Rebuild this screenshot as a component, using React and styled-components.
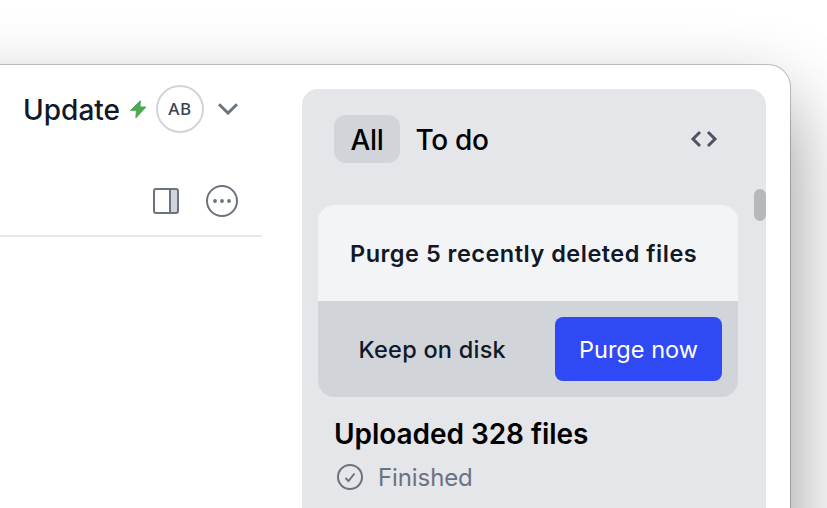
import React from "react";
import styled, { createGlobalStyle } from "styled-components";

const GlobalStyle = createGlobalStyle`
  * { box-sizing: border-box; }
  body { margin: 0; background: #fff; overflow: hidden; }
  button { border: 0; background: none; padding: 0; margin: 0; font: inherit; color: inherit; }
  svg { display: block; flex: none; }
`;

const Desktop = styled.div`
  width: 827px;
  height: 508px;
  overflow: hidden;
  padding-top: 65px;
  background: #fff;
  font-family: Inter, "Liberation Sans", sans-serif;
  -webkit-font-smoothing: antialiased;
`;

const AppWindow = styled.div`
  display: flex;
  gap: 40px;
  width: 1190px;
  height: 900px;
  margin-left: -400px;
  padding-right: 24px;
  border-radius: 22px;
  background: #fff;
  box-shadow: 0 0 0 1px rgba(0, 0, 0, 0.22), 0 36px 80px rgba(0, 0, 0, 0.43);
`;

const Main = styled.main`
  flex: 1;
  min-width: 0;
`;

const TitleBar = styled.header`
  display: flex;
  align-items: center;
  justify-content: flex-end;
  height: 88px;
  padding-right: 24px;
`;

const UpdateLabel = styled.span`
  margin-right: 8px;
  padding-top: 1px;
  font-size: 28px;
  line-height: 40px;
  font-weight: 500;
  color: #111827;
`;

const Avatar = styled.span`
  display: flex;
  align-items: center;
  justify-content: center;
  width: 48px;
  height: 48px;
  margin: 0 14px 0 8px;
  padding-bottom: 1px;
  border: 2px solid #d1d5db;
  border-radius: 50%;
  font-family: "Noto Sans", Inter, sans-serif;
  font-size: 17px;
  font-weight: 500;
  letter-spacing: 0.5px;
  color: #374151;
`;

const Toolbar = styled.div`
  display: flex;
  align-items: center;
  justify-content: flex-end;
  gap: 26px;
  height: 84px;
  padding: 14px 24px 0 0;
  border-bottom: 2px solid #e5e7eb;
`;

const Panel = styled.aside`
  position: relative;
  width: 464px;
  margin-top: 24px;
  padding: 26px 28px 0 16px;
  border-radius: 16px 16px 0 0;
  background: #e5e6ea;
`;

const Tabs = styled.nav`
  display: flex;
  align-items: center;
  height: 48px;
  margin-bottom: 42px;
  padding: 0 20px 0 16px;
`;

const Tab = styled.button`
  height: 48px;
  padding: 1px 16px 0;
  border-radius: 12px;
  background: ${(p) => (p.$active ? "#d1d5d9" : "transparent")};
  font-size: 28px;
  font-weight: 500;
  line-height: 49px;
  letter-spacing: -0.3px;
  color: #000;

  &:first-child {
    width: 66px;
    padding: 1px 0 0;
  }

  & + & {
    padding-left: 15.5px;
  }
`;

const CodeButton = styled.button`
  margin-left: auto;
`;

const Card = styled.section`
  overflow: hidden;
  border-radius: 16px;
  background: #f3f4f6;
`;

const CardTitle = styled.h2`
  height: 96px;
  margin: 0;
  padding-left: 32px;
  font-size: 23.5px;
  line-height: 97px;
  font-weight: 600;
  letter-spacing: 0.5px;
  white-space: nowrap;
  color: #111827;
`;

const CardActions = styled.div`
  display: flex;
  justify-content: flex-end;
  gap: 25px;
  padding: 16px;
  background: #d1d5d9;
`;

const Button = styled.button`
  height: 64px;
  padding: 0 24px;
  border-radius: 8px;
  background: ${(p) => (p.$primary ? "#2f49f5" : "transparent")};
  font-size: 23.5px;
  line-height: 65px;
  font-weight: ${(p) => (p.$primary ? 400 : 500)};
  letter-spacing: ${(p) => (p.$primary ? "0.02px" : "0.24px")};
  white-space: nowrap;
  color: ${(p) => (p.$primary ? "#fff" : "#111827")};
`;

const Entry = styled.article`
  padding: 17px 16px 0;
`;

const EntryTitle = styled.h3`
  margin: 0;
  font-size: 28px;
  line-height: 40px;
  font-weight: 600;
  letter-spacing: -0.05px;
  color: #000;
`;

const EntryStatus = styled.p`
  display: flex;
  align-items: center;
  gap: 12px;
  margin: 5px 0 0;
  font-size: 24px;
  line-height: 32px;
  letter-spacing: -0.1px;
  color: #6b7280;
`;

const StatusText = styled.span`
  padding-top: 3px;
`;

const ScrollThumb = styled.div`
  position: absolute;
  top: 100px;
  right: 0;
  width: 12px;
  height: 32px;
  border-radius: 6px;
  background: #b7b8bc;
`;

const BoltIcon = () => (
  <svg width="20" height="20" viewBox="0 0 20 20">
    <path d="M12.3 1.9 2.5 11.3h5.9L7.9 18.9 17.9 8h-5.9z" fill="#4fa653" stroke="#4fa653" strokeWidth="1" strokeLinejoin="round" />
  </svg>
);

const ChevronIcon = () => (
  <svg width="20" height="12" viewBox="0 0 20 12" fill="none" stroke="#6b7280" strokeWidth="3">
    <path d="M1 1.2 10 10l9-8.8" />
  </svg>
);

const SidebarIcon = () => (
  <svg width="28" height="28" viewBox="0 0 28 28">
    <path d="M18 2h7v24h-7z" fill="#d1d5db" />
    <rect x="2" y="2" width="24" height="24" rx="2" fill="none" stroke="#6b7280" strokeWidth="2" />
    <path d="M18 2v24" stroke="#6b7280" strokeWidth="2" />
  </svg>
);

const MoreIcon = () => (
  <svg width="32" height="32" viewBox="0 0 32 32" fill="#6b7280">
    <circle cx="16" cy="16" r="15" fill="none" stroke="#6b7280" strokeWidth="2" />
    <circle cx="9" cy="16" r="1.9" />
    <circle cx="16" cy="16" r="1.9" />
    <circle cx="23" cy="16" r="1.9" />
  </svg>
);

const CodeIcon = () => (
  <svg width="28" height="18" viewBox="0 0 28 18" fill="none" stroke="#4b5563" strokeWidth="3">
    <path d="M10 2 3 9l7 7M18 2l7 7-7 7" />
  </svg>
);

const CheckIcon = () => (
  <svg width="32" height="32" viewBox="0 0 32 32" fill="none" stroke="#6b7280" strokeWidth="2">
    <circle cx="16" cy="16" r="12" />
    <path d="m11.5 17 3 3 6-7.5" />
  </svg>
);

export default function App() {
  return (
    <Desktop>
      <GlobalStyle />
      <AppWindow>
        <Main>
          <TitleBar>
            <UpdateLabel>Update</UpdateLabel>
            <BoltIcon />
            <Avatar>AB</Avatar>
            <ChevronIcon />
          </TitleBar>
          <Toolbar>
            <SidebarIcon />
            <MoreIcon />
          </Toolbar>
        </Main>
        <Panel>
          <Tabs>
            <Tab $active>All</Tab>
            <Tab>To do</Tab>
            <CodeButton aria-label="View source">
              <CodeIcon />
            </CodeButton>
          </Tabs>
          <Card>
            <CardTitle>Purge 5 recently deleted files</CardTitle>
            <CardActions>
              <Button>Keep on disk</Button>
              <Button $primary>Purge now</Button>
            </CardActions>
          </Card>
          <Entry>
            <EntryTitle>Uploaded 328 files</EntryTitle>
            <EntryStatus>
              <CheckIcon />
              <StatusText>Finished</StatusText>
            </EntryStatus>
          </Entry>
          <ScrollThumb />
        </Panel>
      </AppWindow>
    </Desktop>
  );
}
